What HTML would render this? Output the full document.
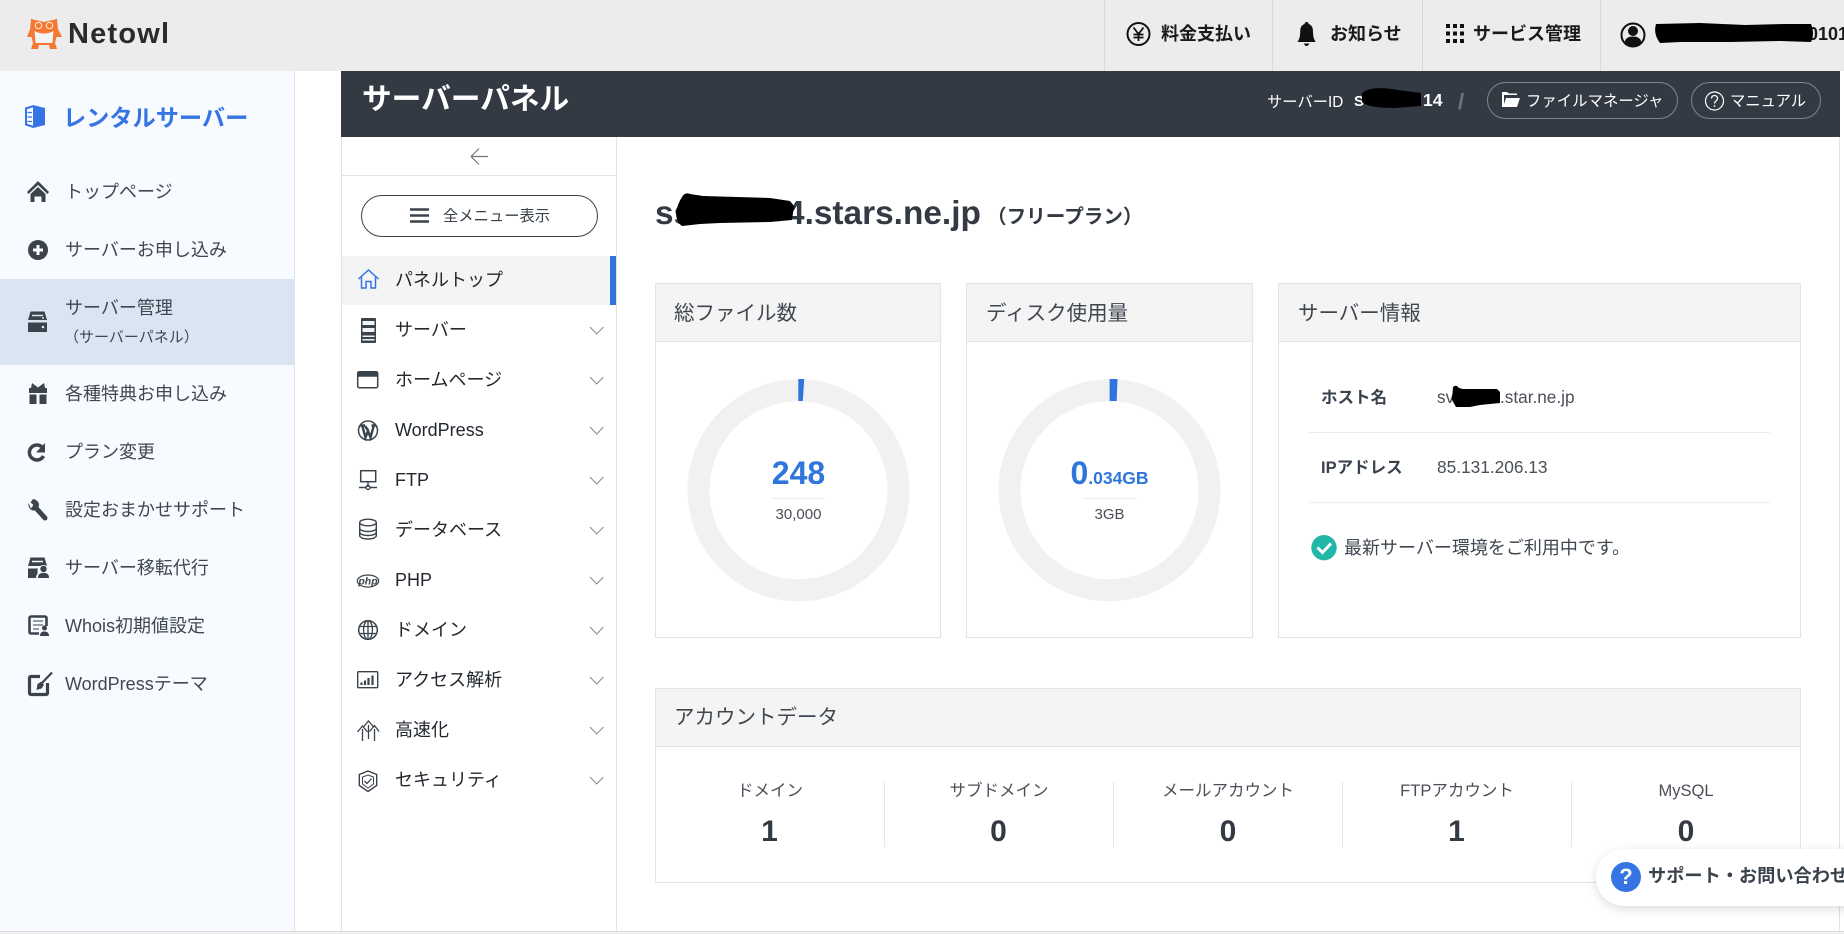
<!DOCTYPE html>
<html lang="ja"><head><meta charset="utf-8"><title>サーバーパネル</title>
<style>
html,body{margin:0;padding:0;background:#fff}
#p{position:relative;width:1844px;height:934px;overflow:hidden;background:#fff;font-family:"Liberation Sans","Noto Sans CJK JP",sans-serif;color:#3a424c}
.b{position:absolute}
.t{position:absolute;white-space:nowrap;line-height:30px;height:30px;font-size:18px}
.c{transform:translateX(-50%)}
.s{left:65px;color:#3f4750}
.n{left:395px;color:#23282f}
.h{font-size:20.5px;color:#3f4750}
.w{color:#fff}
svg{position:absolute;left:0;top:0}
</style></head><body><div id="p">
<div class="b" style="left:0;top:0;width:1844px;height:71px;background:#ececec"></div>
<div class="b" style="left:0;top:71px;width:294px;height:860px;background:#f7fbff;border-right:1px solid #dfe4e8"></div>
<div class="b" style="left:0;top:279px;width:294px;height:86px;background:#d9e6f1"></div>
<div class="b" style="left:341px;top:71px;width:1499px;height:66px;background:#333a43"></div>
<div class="b" style="left:341px;top:137px;width:274px;height:794px;border-left:1px solid #e3e3e3;border-right:1px solid #e3e3e3"></div>
<div class="b" style="left:342px;top:175px;width:274px;height:1px;background:#e3e3e3"></div>
<div class="b" style="left:342px;top:256px;width:268px;height:49px;background:#f4f4f4"></div>
<div class="b" style="left:610px;top:256px;width:6px;height:49px;background:#2e75dc"></div>
<div class="b" style="left:1839px;top:137px;width:1px;height:794px;background:#e3e3e3"></div>
<div class="b" style="left:0;top:931px;width:1844px;height:3px;background:#f2f2f2;border-top:1px solid #d8d8d8;box-sizing:border-box"></div>
<div class="b" style="left:1104px;top:0;width:1px;height:71px;background:#d8d8d8"></div>
<div class="b" style="left:1272px;top:0;width:1px;height:71px;background:#d8d8d8"></div>
<div class="b" style="left:1422px;top:0;width:1px;height:71px;background:#d8d8d8"></div>
<div class="b" style="left:1600px;top:0;width:1px;height:71px;background:#d8d8d8"></div>

<div class="b" style="left:361px;top:195px;width:237px;height:42px;box-sizing:border-box;border:1.5px solid #3a424c;border-radius:21px;background:#fff"></div>
<div class="b" style="left:1487px;top:82px;width:191px;height:37px;box-sizing:border-box;border:1px solid #80868d;border-radius:19px"></div>
<div class="b" style="left:1691px;top:82px;width:130px;height:37px;box-sizing:border-box;border:1px solid #80868d;border-radius:19px"></div>

<!-- cards -->
<div class="b" style="left:655px;top:283px;width:286px;height:355px;box-sizing:border-box;border:1px solid #e4e4e4"><div style="height:57px;background:#f4f4f4;border-bottom:1px solid #e4e4e4"></div></div>
<div class="b" style="left:966px;top:283px;width:287px;height:355px;box-sizing:border-box;border:1px solid #e4e4e4"><div style="height:57px;background:#f4f4f4;border-bottom:1px solid #e4e4e4"></div></div>
<div class="b" style="left:1278px;top:283px;width:523px;height:355px;box-sizing:border-box;border:1px solid #e4e4e4"><div style="height:57px;background:#f4f4f4;border-bottom:1px solid #e4e4e4"></div></div>
<div class="b" style="left:655px;top:688px;width:1146px;height:195px;box-sizing:border-box;border:1px solid #e4e4e4"><div style="height:57px;background:#f4f4f4;border-bottom:1px solid #e4e4e4"></div></div>
<div class="b" style="left:1309px;top:432px;width:461px;height:1px;background:#ececec"></div>
<div class="b" style="left:1309px;top:502px;width:461px;height:1px;background:#ececec"></div>
<div class="b" style="left:884px;top:782px;width:1px;height:65px;background:#e6e6e6"></div>
<div class="b" style="left:1113px;top:782px;width:1px;height:65px;background:#e6e6e6"></div>
<div class="b" style="left:1342px;top:782px;width:1px;height:65px;background:#e6e6e6"></div>
<div class="b" style="left:1571px;top:782px;width:1px;height:65px;background:#e6e6e6"></div>
<div class="b" style="left:771px;top:498px;width:54px;height:1px;background:#ececec"></div>
<div class="b" style="left:1082px;top:498px;width:55px;height:1px;background:#ececec"></div>

<!-- header text -->
<div class="t" style="left:68px;top:19px;font-size:29px;font-weight:700;letter-spacing:1.2px;color:#2b2b2b">Netowl</div>
<div class="t" style="left:1161px;top:19px;font-weight:700;color:#1a1a1a">料金支払い</div>
<div class="t" style="left:1330px;top:19px;font-weight:700;color:#1a1a1a">お知らせ</div>
<div class="t" style="left:1473px;top:19px;font-weight:700;color:#1a1a1a">サービス管理</div>
<div class="t" style="left:1808px;top:19px;font-weight:700;color:#1a1a1a">0101</div>

<div class="t w" style="left:362px;top:85px;font-size:29.7px;font-weight:700">サーバーパネル</div>
<div class="t w" style="left:1267px;top:88px;font-size:15.3px">サーバーID</div>
<div class="t w" style="left:1354px;top:87px;font-size:15px;font-weight:700">S</div>
<div class="t w" style="left:1423px;top:85px;font-size:17.5px;font-weight:700">14</div>
<div class="t" style="left:1458px;top:87px;font-size:22px;font-weight:700;color:#6f757c">/</div>
<div class="t w" style="left:1526px;top:87px;font-size:15.4px">ファイルマネージャ</div>
<div class="t w" style="left:1730px;top:87px;font-size:15.3px">マニュアル</div>

<!-- sidebar text -->
<div class="t" style="left:63px;top:103px;font-size:23.2px;font-weight:700;color:#3574e2">レンタルサーバー</div>
<div class="t s" style="top:177px">トップページ</div>
<div class="t s" style="top:235px">サーバーお申し込み</div>
<div class="t s" style="top:293px">サーバー管理</div>
<div class="t s" style="top:323px;left:64px;font-size:15px">（サーバーパネル）</div>
<div class="t s" style="top:379px">各種特典お申し込み</div>
<div class="t s" style="top:437px">プラン変更</div>
<div class="t s" style="top:495px">設定おまかせサポート</div>
<div class="t s" style="top:553px">サーバー移転代行</div>
<div class="t s" style="top:611px">Whois初期値設定</div>
<div class="t s" style="top:669px">WordPressテーマ</div>

<!-- second nav text -->
<div class="t" style="left:443px;top:202px;font-size:15.3px;color:#3a424c">全メニュー表示</div>
<div class="t n" style="top:265px">パネルトップ</div>
<div class="t n" style="top:315px">サーバー</div>
<div class="t n" style="top:365px">ホームページ</div>
<div class="t n" style="top:415px">WordPress</div>
<div class="t n" style="top:465px">FTP</div>
<div class="t n" style="top:515px">データベース</div>
<div class="t n" style="top:565px">PHP</div>
<div class="t n" style="top:615px">ドメイン</div>
<div class="t n" style="top:665px">アクセス解析</div>
<div class="t n" style="top:715px">高速化</div>
<div class="t n" style="top:765px">セキュリティ</div>

<!-- main text -->
<div class="t" style="left:655px;top:199px;font-size:33.4px;font-weight:700;color:#333a43">ss</div>
<div class="t" style="left:786px;top:199px;font-size:33.4px;font-weight:700;color:#333a43">4.stars.ne.jp</div>
<div class="t" style="left:987px;top:202px;font-size:19.6px;font-weight:700;color:#333a43">（フリープラン）</div>
<div class="t h" style="left:674px;top:299px">総ファイル数</div>
<div class="t h" style="left:986px;top:299px">ディスク使用量</div>
<div class="t h" style="left:1298px;top:299px">サーバー情報</div>
<div class="t c" style="left:798.5px;top:458px;font-size:32px;font-weight:700;color:#2e75dc">248</div>
<div class="t c" style="left:798.5px;top:500px;font-size:15px;color:#4a4f57">30,000</div>
<div class="t c" style="left:1109.5px;top:458px;font-size:32px;font-weight:700;color:#2e75dc">0<span style="font-size:17.5px">.034GB</span></div>
<div class="t c" style="left:1109.5px;top:500px;font-size:15px;color:#4a4f57">3GB</div>
<div class="t" style="left:1321px;top:383px;font-size:16.5px;font-weight:700;color:#3a424c">ホスト名</div>
<div class="t" style="left:1437px;top:382px;font-size:17.2px;color:#4a4f57">sv</div>
<div class="t" style="left:1500px;top:382px;font-size:17.2px;color:#4a4f57">.star.ne.jp</div>
<div class="t" style="left:1321px;top:453px;font-size:16.5px;font-weight:700;color:#3a424c">IPアドレス</div>
<div class="t" style="left:1437px;top:452px;font-size:17.3px;color:#4a4f57">85.131.206.13</div>
<div class="t" style="left:1344px;top:533px;font-size:18px;color:#3f4750">最新サーバー環境をご利用中です。</div>
<div class="t h" style="left:674px;top:703px">アカウントデータ</div>
<div class="t c" style="left:770px;top:776px;font-size:16.5px;color:#4a4f57">ドメイン</div>
<div class="t c" style="left:999px;top:776px;font-size:16.5px;color:#4a4f57">サブドメイン</div>
<div class="t c" style="left:1228px;top:776px;font-size:16.5px;color:#4a4f57">メールアカウント</div>
<div class="t c" style="left:1457px;top:776px;font-size:16.5px;color:#4a4f57">FTPアカウント</div>
<div class="t c" style="left:1686px;top:776px;font-size:16.5px;color:#4a4f57">MySQL</div>
<div class="t c" style="left:769.5px;top:817px;font-size:30px;font-weight:700;color:#333a43">1</div>
<div class="t c" style="left:998.5px;top:817px;font-size:30px;font-weight:700;color:#333a43">0</div>
<div class="t c" style="left:1228px;top:817px;font-size:30px;font-weight:700;color:#333a43">0</div>
<div class="t c" style="left:1456.5px;top:817px;font-size:30px;font-weight:700;color:#333a43">1</div>
<div class="t c" style="left:1686px;top:817px;font-size:30px;font-weight:700;color:#333a43">0</div>

<!-- icons -->
<svg width="1844" height="934" viewBox="0 0 1844 934" fill="none">
<!-- owl -->
<path d="M31 19L44 22L57 19L58 30L55 43L57 49H50L49 45H39L38 49H31L33 43L30 30Z" fill="#f4782f"/>
<path d="M31 27L27 37L33 37ZM57 27L62 37L56 37Z" fill="#f4782f"/>
<path d="M34.5 31Q44 36 53.5 31L52.5 43H35.5Z" fill="#f3f3f3"/>
<circle cx="38.5" cy="25.5" r="3.2" stroke="#fde3d2" stroke-width="1.2"/><circle cx="49.5" cy="25.5" r="3.2" stroke="#fde3d2" stroke-width="1.2"/>
<!-- top bar icons -->
<circle cx="1138.5" cy="34" r="11" stroke="#111" stroke-width="2"/>
<path d="M1133.5 27.5L1138.5 34L1143.5 27.5M1138.5 34V41M1133.5 34.5H1143.5M1133.5 37.5H1143.5" stroke="#111" stroke-width="1.8"/>
<path d="M1306.6 22c-1.3 0-2 1-2 2-3.4 1.2-4.4 4-4.4 7.5 0 5-1 8-2.7 10.5h18.2c-1.7-2.5-2.7-5.5-2.7-10.5 0-3.5-1-6.3-4.4-7.5 0-1-.7-2-2-2zM1304 43.5h5.2c-.4 1.7-1.4 2.5-2.6 2.5s-2.2-.8-2.6-2.5z" fill="#111"/>
<path d="M1446 24h4v4h-4zM1453 24h4v4h-4zM1460 24h4v4h-4zM1446 31.5h4v4h-4zM1453 31.5h4v4h-4zM1460 31.5h4v4h-4zM1446 39h4v4h-4zM1453 39h4v4h-4zM1460 39h4v4h-4z" fill="#111"/>
<circle cx="1633" cy="35" r="11.5" stroke="#111" stroke-width="2"/>
<circle cx="1633" cy="31" r="5" fill="#111"/><path d="M1624.5 42.5c1-4.5 4-6 8.5-6s7.5 1.5 8.500 6c-2 2-5 3.500-8.500 3.500s-6.500-1.500-8.500-3.500z" fill="#111"/>
<path d="M1656 24L1700 23L1745 25L1785 24L1811 24Q1815 34 1811 42L1780 41L1730 42L1680 42L1660 43Q1653 34 1656 24Z" fill="#000"/>
<!-- dark bar icons -->
<path d="M1362 93Q1372 85 1398 90L1421 93V106L1395 108Q1368 108 1362 102Z" fill="#000"/>
<path d="M1502 92v15h15l3-9h-14l-2 6v-9h13v-1.5h-8l-2-1.5z" fill="#fff"/>
<circle cx="1714.5" cy="101" r="9" stroke="#fff" stroke-width="1.2"/>
<path d="M1711.5 98.5c0-4 6-4 6 0 0 2.500-3 2.500-3 5" stroke="#fff" stroke-width="1.3"/><circle cx="1714.5" cy="106" r=".9" fill="#fff"/>
<!-- sidebar icons -->
<path d="M33.5 106L26 108.5V124.5L33.5 127" stroke="#3574e2" stroke-width="2"/>
<path d="M33 105L45 108V125L33 128Z" fill="#3574e2"/>
<path d="M27.5 112.5H32M27.5 117H32M27.5 121.5H32" stroke="#3574e2" stroke-width="1.3"/>
<g fill="#3b434d">
<path d="M38 181L49 192L47.5 194L38 185L28.5 194L27 192Z"/>
<path d="M38 187L45.5 194V202H41.5V196.5H34.5V202H30.5V194Z"/>
<circle cx="38" cy="250" r="10"/>
<path d="M30.5 311.5H44.5L47 320H28Z"/><path d="M28 322.5H47V332H28Z"/>
<path d="M29 388H47V393H29ZM29.5 394.5H36.5V404H29.5ZM39.5 394.5H46.5V404H39.5Z"/>
<path d="M32 383L38 387.5L44 383L45 388H31Z"/>
<path d="M45 443V452.5H36Z"/>
<path d="M30.5 557.5H44.5L47 566H28Z"/><path d="M28 568.5H47V578H28Z"/>
</g>
<path d="M38 245V255M33 250H43" stroke="#fff" stroke-width="3"/>
<path d="M32 315.5H43" stroke="#d9e6f1" stroke-width="1.5"/>
<circle cx="43" cy="318" r="1" fill="#d9e6f1"/><circle cx="43" cy="327" r="1.3" fill="#d9e6f1"/>
<path d="M42.5 447.5A7.5 7.5 0 1 0 43.5 456" stroke="#3b434d" stroke-width="3.5"/>
<path d="M35 507L45 518" stroke="#3b434d" stroke-width="5" stroke-linecap="round"/>
<path d="M33 499L30.5 502.5L33.5 505L31 508.5L28.5 503C28 506 29.5 510 33 510.5C36.5 511 39 508 39 505C39 502 36.5 499.5 33 499Z" fill="#3b434d"/>
<path d="M32 561.5H43" stroke="#f7fbff" stroke-width="1.5"/>
<circle cx="43.5" cy="571" r="6" fill="#f7fbff"/><path d="M36 579C36 573 39 571 43.5 571S51 573 51 579Z" fill="#f7fbff"/>
<circle cx="43.5" cy="569" r="3.2" fill="#3b434d"/><path d="M38 578C38 574 40 573 43.5 573S49 574 49 578Z" fill="#3b434d"/>
<path d="M46.5 626V618A1.5 1.5 0 0 0 45 616.5H31A1.5 1.5 0 0 0 29.5 618V632A1.5 1.5 0 0 0 31 633.5H39" stroke="#3b434d" stroke-width="2.6"/>
<path d="M33 621H43M33 625H43M33 629H39" stroke="#8a9097" stroke-width="1.8"/>
<circle cx="44.5" cy="628" r="2.5" fill="#3b434d"/><path d="M40 636C40 632.5 42 631.5 44.5 631.5S49 632.5 49 636Z" fill="#3b434d"/>
<path d="M40 676.5H31A1.5 1.5 0 0 0 29.5 678V693A1.5 1.5 0 0 0 31 694.5H46A1.5 1.5 0 0 0 47.5 693V683" stroke="#3b434d" stroke-width="3.2"/>
<path d="M41 684L52 672.5" stroke="#3b434d" stroke-width="2.2"/><path d="M36.5 690L37.5 684L41.5 681.5L44 685L41.5 688.5Z" fill="#3b434d"/>
<!-- second nav -->
<path d="M471 156.5H488M471 156.5L479 148.5M471 156.5L479 164.5" stroke="#6f757c" stroke-width="1.2"/>
<path d="M410 209.5H429M410 215.5H429M410 221.5H429" stroke="#3a424c" stroke-width="2.4"/>
<g stroke="#3574e2" stroke-width="1.5"><path d="M358.5 279L368.5 270L378.5 279M361.5 277V288H366V281.5H371V288H375.5V277"/></g>
<!-- server -->
<rect x="361" y="318" width="15" height="25" rx="1" fill="#3b434d"/>
<path d="M362.5 321H374.5V325H362.5ZM362.5 328H374.5V332H362.5ZM362.5 335.5H374.5V337H362.5ZM362.5 339H374.5V340.5H362.5Z" fill="#f3f3f3"/>
<g stroke="#3b434d" fill="none">
<rect x="357.7" y="371.7" width="20" height="16" rx="1.5" stroke-width="1.5"/>
<path d="M358 374.5H377.5" stroke-width="4.5"/>
<circle cx="368" cy="430.5" r="9.5" stroke-width="1.5"/>
<path d="M362 425L365.5 437.5L368 431L370.5 437.5L374 425M360.5 425.5H365M371.5 425.5H375.5M365 426L368.5 431" stroke-width="2.4"/>
<rect x="360.7" y="470.7" width="15" height="11" stroke-width="1.5"/>
<path d="M368 482V487M359 487.5H365.5M370.5 487.5H377" stroke-width="1.4"/><circle cx="368" cy="487.5" r="2" stroke-width="1.4"/>
<ellipse cx="368" cy="522.5" rx="8.3" ry="3.3" stroke-width="1.4"/>
<path d="M359.7 522.5V535.5C359.7 537.5 363 539 368 539S376.3 537.5 376.3 535.5V522.5M359.7 528C359.7 530 363 531.5 368 531.5S376.3 530 376.3 528M359.7 532C359.7 534 363 535.5 368 535.5S376.3 534 376.3 532" stroke-width="1.4"/>
<ellipse cx="368" cy="581" rx="10.7" ry="6" stroke-width="1.2"/>
<circle cx="368" cy="630" r="9.3" stroke-width="1.5"/>
<ellipse cx="368" cy="630" rx="4.5" ry="9.3" stroke-width="1.3"/>
<path d="M359.5 626.5H376.5M359.5 633.5H376.5M368 620.7V639.5" stroke-width="1.3"/>
<rect x="357.7" y="671.7" width="20" height="16" rx="1" stroke-width="1.4"/>
<path d="M361.5 685V682.5M365 685V680.5M368.5 685V678M372.5 685V675.5" stroke-width="2.2"/>
<path d="M362.5 741V729M357.5 732L362.5 726L367.5 732M368.5 739V725M363 727.5L368.5 721L374 727.5M374.5 741V729M369.5 731.5L374.5 725.5L379 731.5" stroke-width="1.3"/>
<path d="M368 771L376.7 774.5V785.5L368 791.5L359.3 785.5V774.5Z" stroke-width="1.4"/>
<path d="M368 775L373.5 777V784L368 788L362.5 784V777Z" stroke-width="1"/>
<path d="M364.5 781L367 783.5L371.5 778.5" stroke-width="1.3"/>
</g>
<text x="368" y="584.5" font-family="Liberation Sans" font-size="10.5" font-weight="700" font-style="italic" text-anchor="middle" fill="#3b434d">php</text>
<g stroke="#8a8f95" stroke-width="1.1">
<path d="M590 327L596.7 334L603.4 327M590 377L596.7 384L603.4 377M590 427L596.7 434L603.4 427M590 477L596.7 484L603.4 477M590 527L596.7 534L603.4 527M590 577L596.7 584L603.4 577M590 627L596.7 634L603.4 627M590 677L596.7 684L603.4 677M590 727L596.7 734L603.4 727M590 777L596.7 784L603.4 777"/>
</g>
<!-- donuts -->
<circle cx="798.5" cy="490.3" r="100" stroke="#f1f1f1" stroke-width="22"/>
<circle cx="1109.5" cy="490.3" r="100" stroke="#f1f1f1" stroke-width="22"/>
<path d="M798.3 379H804.2L802.8 401H798.3Z" fill="#2e75dc"/>
<path d="M1109.6 379H1117.5L1116.7 401H1109.6Z" fill="#2e75dc"/>
<!-- redactions -->
<path d="M682 197Q685 192 690 194L703 196L770 198L790 201L794 206L792 220L770 222L720 223L700 224L682 226Q676 222 676 212Q678 203 682 197Z" fill="#000"/>
<path d="M1453 387Q1456 384 1459 388L1463 389L1497 389L1500 392L1500 403L1480 405L1470 407L1456 407L1452 400Z" fill="#000"/>
<!-- check -->
<circle cx="1324" cy="547.7" r="12.7" fill="#20b7a6"/>
<path d="M1317.5 547.5L1322.5 552.5L1331 543.5" stroke="#fff" stroke-width="3"/>
</svg>

<!-- support pill -->
<div class="b" style="left:1596px;top:849px;width:290px;height:57px;background:#fff;border-radius:28px;box-shadow:0 3px 10px rgba(0,0,0,.14)"></div>
<div class="b" style="left:1611px;top:862px;width:30px;height:30px;border-radius:50%;background:#3574e2;color:#fff;font-size:22px;font-weight:700;line-height:30px;text-align:center">?</div>
<div class="t" style="left:1648px;top:861px;font-size:18.2px;font-weight:700;color:#3a424c">サポート・お問い合わせ</div>
</div></body></html>
